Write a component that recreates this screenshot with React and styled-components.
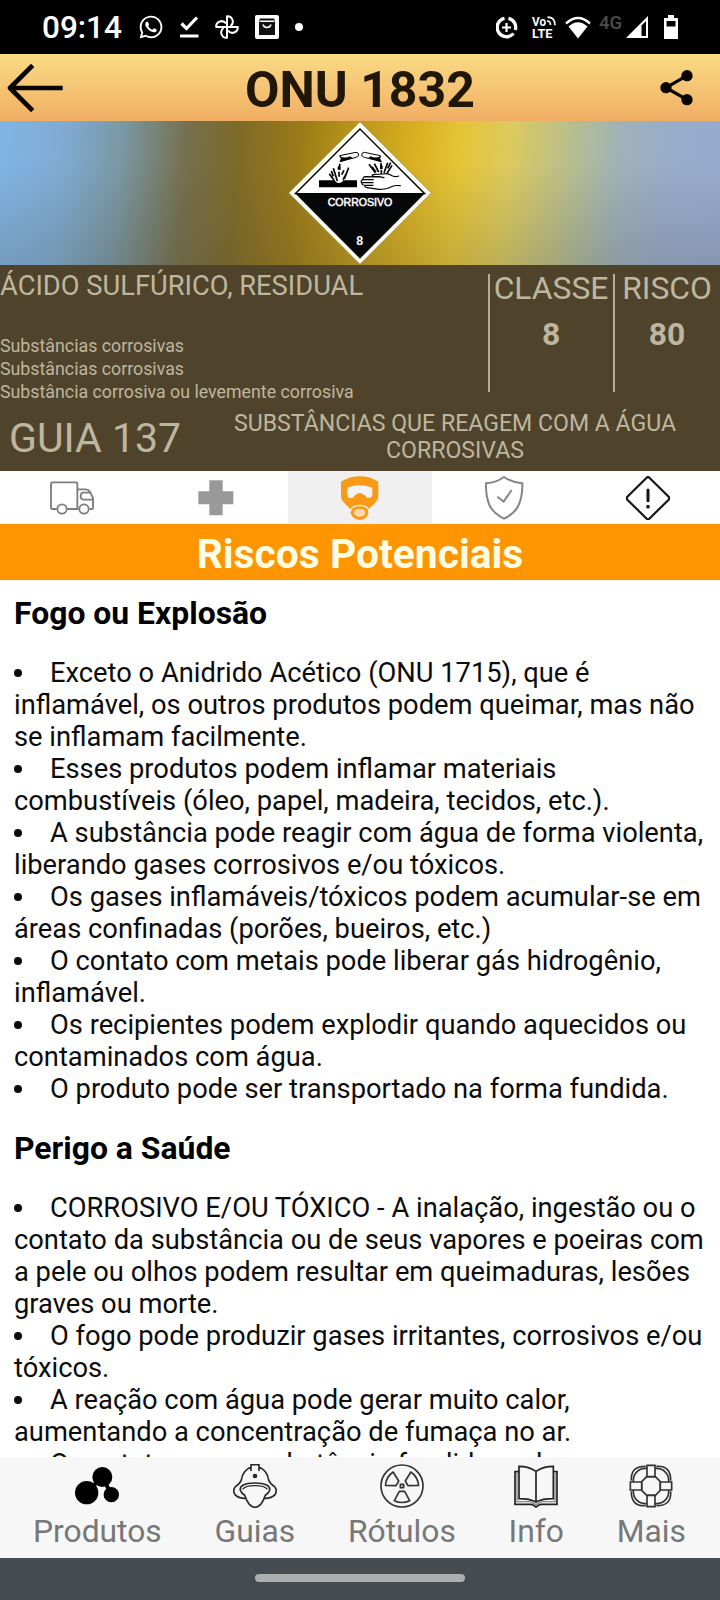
import styled, { createGlobalStyle } from 'styled-components';
import { FaWhatsapp } from 'react-icons/fa';

const GlobalStyle = createGlobalStyle`
  body {
    margin: 0;
    background: #fff;
    font-family: Roboto, 'Liberation Sans', sans-serif;
  }

  * {
    box-sizing: border-box;
  }

  svg {
    display: block;
    flex-shrink: 0;
  }
`;

const Screen = styled.div`
  width: 720px;
  height: 1600px;
  display: flex;
  flex-direction: column;
  overflow: hidden;
`;

/* Status bar */

const StatusBar = styled.div`
  height: 54px;
  flex-shrink: 0;
  display: flex;
  align-items: center;
  padding: 0 42px 0 42px;
  background: #000;
  color: #fff;
`;

const Time = styled.div`
  width: 96px;
  padding-top: 1px;
  font-size: 31.5px;
  font-weight: 500;
  line-height: 54px;
`;

const StatusIcons = styled.div`
  display: flex;
  align-items: center;
  gap: ${({ $gap }) => $gap}px;
`;

const Spacer = styled.div`
  flex: 1;
`;

const Dot = styled.div`
  width: 8px;
  height: 8px;
  border-radius: 50%;
  background: #fff;
`;

const Signal = styled.div`
  display: flex;
  align-items: center;
  gap: 4px;
  margin: 0 8px 0 0;
`;

const Network = styled.span`
  width: 23px;
  margin-top: -9px;
  font-size: 18.5px;
  font-weight: 500;
  color: #4c4c4c;
`;

/* Header */

const Header = styled.header`
  height: 67px;
  flex-shrink: 0;
  display: grid;
  grid-template-columns: 100px 1fr 100px;
  align-items: center;
  background: linear-gradient(#fadb84, #f0ae64);
`;

const HeaderButton = styled.button`
  display: flex;
  justify-content: ${({ $end }) => ($end ? 'flex-end' : 'flex-start')};
  padding: ${({ $end }) => ($end ? '0 27px 0 0' : '0 0 0 7px')};
  border: none;
  background: none;
`;

const Title = styled.h1`
  margin: 0;
  padding-top: 4px;
  font-size: 50px;
  font-weight: 700;
  line-height: 60px;
  text-align: center;
  white-space: nowrap;
  color: #211708;
`;

/* Placard */

const Banner = styled.div`
  height: 144px;
  flex-shrink: 0;
  display: flex;
  justify-content: center;
  background:
    linear-gradient(to bottom, rgba(70, 70, 60, 0) 30%, rgba(70, 70, 60, 0.2)),
    linear-gradient(
      95deg,
      #7fb5e6 0%,
      #7fabd2 9%,
      #7a97a3 17%,
      #756f4c 26%,
      #7f6a28 33%,
      #9a7a19 41%,
      #bb9718 49%,
      #d9b022 57%,
      #e5c436 63%,
      #dcca5f 70%,
      #b9be8c 78%,
      #9fb2b8 85%,
      #98adca 91%,
      #97abcf 100%
    );
`;

/* Product info */

const Info = styled.section`
  height: 206px;
  flex-shrink: 0;
  display: flex;
  flex-direction: column;
  background: #4f442b;
  color: #bfb69f;
`;

const InfoTop = styled.div`
  height: 138px;
  display: flex;
`;

const Product = styled.div`
  width: 488px;
  display: flex;
  flex-direction: column;
  justify-content: space-between;
  padding-top: 5px;
`;

const ProductName = styled.div`
  font-size: 27.3px;
  line-height: 32px;
  white-space: nowrap;
`;

const Hazard = styled.div`
  font-size: 17.8px;
  line-height: 23px;
`;

const Stat = styled.div`
  width: ${({ $width }) => $width}px;
  height: 118px;
  margin-top: 9px;
  border-left: 2px solid #b5ad98;
  display: flex;
  flex-direction: column;
  align-items: center;
`;

const StatLabel = styled.div`
  height: 37px;
  margin-left: -1px;
  font-size: 31.8px;
  line-height: 29px;
`;

const StatValue = styled.div`
  margin-left: -1px;
  font-size: 31.8px;
  font-weight: 700;
  line-height: 46px;
`;

const GuideRow = styled.div`
  height: 68px;
  display: flex;
  align-items: center;
`;

const GuideNumber = styled.div`
  width: 190px;
  padding-top: 1px;
  font-size: 41px;
  text-align: center;
  white-space: nowrap;
`;

const GuideName = styled.div`
  flex: 1;
  font-size: 23.1px;
  line-height: 27px;
  text-align: center;
`;

/* Tabs */

const Tabs = styled.nav`
  height: 53px;
  flex-shrink: 0;
  display: grid;
  grid-template-columns: repeat(5, 1fr);
  background: #fff;
`;

const Tab = styled.div`
  display: flex;
  align-items: center;
  justify-content: center;
  background: ${({ $active }) => ($active ? '#f0f0f0' : '#fff')};
`;

const SectionTitle = styled.h2`
  height: 56px;
  flex-shrink: 0;
  margin: 0;
  padding-top: 3px;
  background: #ff9500;
  color: #fffde4;
  font-size: 40.8px;
  font-weight: 700;
  line-height: 54px;
  text-align: center;
`;

/* Guide text */

const Content = styled.main`
  flex: 1;
  min-height: 0;
  overflow: hidden;
  padding: 15px 14px 0;
  background: #fff;
  color: #0c0c0c;
`;

const Heading = styled.h3`
  margin: 0 0 26px;
  font-size: 31.9px;
  font-weight: 700;
  line-height: 36px;
  color: #000;
`;

const List = styled.ul`
  margin: 0 0 25px;
  padding: 0;
  list-style: none;
`;

const Item = styled.li`
  font-size: 27.3px;
  line-height: 32px;

  &::before {
    content: '';
    display: inline-block;
    width: 8px;
    height: 8px;
    margin-right: 28px;
    border-radius: 50%;
    background: #0c0c0c;
    vertical-align: 5px;
  }
`;

/* Bottom navigation */

const BottomNav = styled.nav`
  height: 101px;
  flex-shrink: 0;
  display: flex;
  justify-content: space-between;
  padding: 7px 34px 0 33px;
  background: #f7f7f7;
`;

const NavItem = styled.div`
  display: flex;
  flex-direction: column;
  align-items: center;
  gap: 4px;
`;

const NavLabel = styled.span`
  font-size: 31.8px;
  line-height: 38px;
  color: #777;
`;

const GestureBar = styled.div`
  height: 42px;
  flex-shrink: 0;
  display: flex;
  justify-content: center;
  padding-top: 16px;
  background: #454c51;
`;

const Handle = styled.div`
  width: 210px;
  height: 8px;
  border-radius: 4px;
  background: #abafb2;
`;

const DownloadDone = () => (
  <svg width="19" height="22" viewBox="0 0 19 22" fill="none" stroke="#fff" strokeWidth="3.2">
    <path d="M1.5 7.5 6.5 12.5 17 1.5M0 20h18.500" />
  </svg>
);

const Pinwheel = () => (
  <svg width="24" height="24" viewBox="0 0 24 24" fill="none" stroke="#fff" strokeWidth="2" strokeLinejoin="round">
    {[0, 90, 180, 270].map((angle) => (
      <path key={angle} transform={`rotate(${angle} 12 12)`} d="M12 12V1.200A5.400 5.400 0 0 1 15.500 11" />
    ))}
    <path d="M12 5V19M5 12H19" />
  </svg>
);

const Bag = () => (
  <svg width="24" height="24" viewBox="0 0 24 24">
    <rect width="24" height="24" rx="2" fill="#fff" />
    <path d="M5 3.500h14l1 2.500v14H4V6Z" fill="#111" />
    <path d="M4.500 6.200h15M8 9.500c1 4 7 4 8 0" fill="none" stroke="#fff" strokeWidth="1.400" />
  </svg>
);

const DataSaver = () => (
  <svg width="28" height="23" viewBox="1 0 28 23" fill="none" stroke="#fff">
    <path d="M13.500 2.300A9.300 9.300 0 0 1 20.300 14M18.500 17.500A9.300 9.300 0 1 1 9.500 2.300" strokeWidth="3.400" />
    <path d="M11.500 7v9M7 11.500h9" strokeWidth="2.200" />
  </svg>
);

const VoLte = () => (
  <svg width="25" height="24" viewBox="0 0 25 24" fill="#fff" fontFamily="Roboto, sans-serif" fontSize="12.500" fontWeight="700">
    <text x="0" y="10.500" textLength="14" lengthAdjust="spacingAndGlyphs">Vo</text>
    <text x="0" y="22.500" textLength="20.500" lengthAdjust="spacingAndGlyphs">LTE</text>
    <path d="M15 6q3.500 0 3.500 4M15.500 2.200q7.500 0 7.500 8" fill="none" stroke="#fff" strokeWidth="1.700" />
  </svg>
);

const Wifi = () => (
  <svg width="26" height="23" viewBox="0 0 26 23">
    <path d="M13 22.500 3.500 10.500Q13 2 22.500 10.500Z" fill="#fff" />
    <path d="M1 7.500Q13-3.500 25 7.500" fill="none" stroke="#fff" strokeWidth="2.400" />
  </svg>
);

const CellSignal = () => (
  <svg width="22" height="22" viewBox="0 0 22 22">
    <path d="M0 22 22 0V22Z" fill="#fff" />
    <path d="M15.500 9.500 20 5V20H15.500Z" fill="#000" />
  </svg>
);

const Battery = () => (
  <svg width="14" height="24" viewBox="0 0 14 24">
    <path d="M4 0h6v3h4v21H0V3h4Z" fill="#fff" />
    <path d="M2.500 6h9v5.500h-9Z" fill="#000" />
  </svg>
);

const BackArrow = () => (
  <svg width="57" height="50" viewBox="21 189 171 150" fill="none" stroke="#080500" strokeWidth="14">
    <path d="M98 196 30 264 98 332M29 264H188" strokeLinejoin="round" />
  </svg>
);

const Share = () => (
  <svg width="33" height="37" viewBox="899 208 99 111" fill="#080500">
    <path d="M980 228 917 264 980 300" fill="none" stroke="#080500" strokeWidth="10" />
    <circle cx="980" cy="228" r="17" />
    <circle cx="917" cy="264" r="17" />
    <circle cx="980" cy="300" r="17" />
  </svg>
);

// Class 8 placard: two test tubes dripping over a metal bar and a hand
const Placard = () => (
  <svg width="144" height="144" viewBox="54 17 432 432">
    <path d="M270 19 484 233 270 447 56 233Z" fill="#fffdf0" stroke="#8a8259" strokeWidth="2" />
    <path d="M270 40 465 235H75Z" fill="#fff" />
    <path d="M75 234H465L270 430Z" fill="#050708" />
    <path d="M270 41 464 235H76Z" fill="none" stroke="#000" strokeWidth="4" />
    <g stroke="#000" strokeWidth="3" fill="#fff" strokeLinejoin="round">
      <path d="M209 121 258 111Q267 112 266 119 265 124 258 126L210 139 214 130Z" />
      <path d="M331 121 283 111Q274 112 275 119 276 124 283 126L334 139 329 130Z" />
    </g>
    <path d="M208 121Q222 131 240 123L248 128 210 140 214 130ZM333 121Q318 131 302 123L295 128 334 140 329 130Z" />
    <path d="M147 195H195Q197 203 207 203 217 203 219 195H261V216H147Z" />
    <g stroke="#000" fill="none" strokeWidth="5">
      <path d="M209 145V163M207 169V184M190 159 202 197M178 175 192 195M236 157 223 191M222 165 215 178M184 167 190 183M229 175 219 193" />
      <path d="M333 143V158M334 163V177M313 145 326 170M297 147 316 172M306 154 318 171M353 142 342 172M366 150 351 174M362 142 353 159" />
    </g>
    <path d="M203 156q4-8 8 0v7h-8ZM330 153q4-8 8 0v8h-8Z" />
    <path
      d="M386 182Q374 187 362 179 350 173 339 176L315 177Q304 178 307 182 310 184 328 184L342 187M331 185 287 184Q278 185 279 192M310 193H279Q272 195 274 202M309 202H277Q274 206 280 209M309 210H284Q283 216 291 217L327 222Q349 222 364 214 376 209 391 211"
      fill="none"
      stroke="#000"
      strokeWidth="3.500"
      strokeLinecap="round"
    />
    <g
      fill="#fff"
      stroke="#fff"
      strokeWidth="1.500"
      fontFamily="'Liberation Sans', Arial, sans-serif"
      textAnchor="middle"
    >
      <text x="270" y="273" fontSize="32" textLength="194" lengthAdjust="spacingAndGlyphs">CORROSIVO</text>
      <text x="269" y="389" fontSize="37" fontWeight="700" strokeWidth="0">8</text>
    </g>
  </svg>
);

const Truck = () => (
  <svg width="44" height="44" viewBox="150 32 132 132" fill="none" stroke="#7d7d7d" strokeWidth="5.500">
    <path d="M170 131H157Q153 131 153 127V55Q153 51 157 51H229Q232 51 232 54V129M202 131H236M232 72H258Q266 73 271 81L279 98V128Q279 131 276 131H268M272 82H248Q242 84 242 93 242 102 250 103H279" />
    <circle cx="186" cy="131" r="14" fill="#fff" />
    <circle cx="252" cy="131" r="14" fill="#fff" />
  </svg>
);

const Plus = () => (
  <svg width="44" height="44" viewBox="581 32 132 132" fill="#999">
    <path d="M627 45H667V78H699V117H667V150H627V117H594V78H627Z" />
  </svg>
);

const Mask = () => (
  <svg width="44" height="44" viewBox="54 32 132 132">
    <path
      d="M63 49Q90 33 119 33 149 33 175 49V96Q174 106 163 115L147 130Q145 164 119 164 92 163 90 131L74 114Q64 106 63 96Z"
      fill="#f99a16"
    />
    <path d="M82 67Q119 53 157 67V88Q157 97 148 97H142Q128 83 119 83 110 83 98 98H91Q82 97 82 88Z" fill="#f3f3f3" />
    <path d="M91 140Q92 121 119 120 146 121 147 140" fill="none" stroke="#f3f3f3" strokeWidth="4" />
    <ellipse cx="119" cy="142" rx="17" ry="12" fill="#f6d9ae" />
  </svg>
);

const Shield = () => (
  <svg width="44" height="44" viewBox="366 32 132 132" fill="none" stroke="#858585" strokeWidth="6">
    <path d="M432 35Q455 51 487 54 488 91 476 119 464 145 432 160 401 145 388 119 377 91 378 54 410 51 432 35Z" />
    <path d="M412 94 431 109 455 74" />
  </svg>
);

const Warning = () => (
  <svg width="44" height="44" viewBox="798 32 132 132" fill="none" stroke="#151515" strokeWidth="6.500">
    <path d="M860 37Q864 33 868 37L926 94Q930 98 926 103L868 160Q864 164 860 160L802 103Q798 98 802 94Z" />
    <path d="M864 74V106" strokeWidth="9" strokeLinecap="round" />
    <circle cx="864" cy="124" r="5.500" fill="#151515" stroke="none" />
  </svg>
);

const Molecule = () => (
  <svg width="44" height="44" viewBox="225 102 132 132">
    <path d="M307 140 260 188M307 140 334 194" stroke="#000" strokeWidth="12" />
    <circle cx="307" cy="141" r="30" />
    <circle cx="260" cy="188" r="35" />
    <circle cx="334" cy="194" r="23" />
  </svg>
);

const Helmet = () => (
  <svg width="44" height="44" viewBox="699 102 132 132" fill="none" stroke="#2a2a2a" strokeWidth="5" strokeLinejoin="round">
    <path d="M753 111Q728 121 724 150 720 161 706 170 697 181 705 194 716 206 738 205M777 111Q802 121 806 150 810 161 824 170 833 181 825 194 814 206 792 205M753 123V104H777V123" />
    <path d="M721 181Q717 160 765 159 813 160 809 181 806 190 796 196 790 214 782 223 773 232 765 232 757 232 748 223 740 214 734 196 724 190 721 181Z" />
    <path d="M728 178Q735 167 765 167 795 167 802 178" strokeWidth="4" />
    <circle cx="765" cy="138" r="7" fill="#2a2a2a" stroke="none" />
  </svg>
);

const Radiation = () => (
  <svg width="44" height="44" viewBox="60 102 132 132" fill="none" stroke="#333" strokeWidth="5" strokeLinejoin="round">
    <circle cx="126" cy="168" r="63" />
    <rect x="121" y="163" width="10" height="10" />
    {[0, 120, 240].map((angle) => (
      <path key={angle} transform={`rotate(${angle} 126 168)`} d="M118 184H134L149 212Q126 223 103 212Z" />
    ))}
  </svg>
);

const Book = () => (
  <svg width="44" height="44" viewBox="465 102 132 132" fill="none" stroke="#222" strokeWidth="5">
    <path d="M531 124Q510 109 480 109V206Q511 206 531 216 551 206 583 206V109Q552 109 531 124ZM531 124V216" />
    <path d="M480 125H468V223H517Q523 224 531 231 539 224 545 223H594V125H583" />
    <path d="M474 126V215H515L531 224 547 215H588V126" stroke="#888" strokeWidth="4" />
  </svg>
);

const Lifebuoy = () => (
  <svg width="44" height="44" viewBox="807 102 132 132" fill="none" stroke="#333" strokeWidth="5">
    <rect x="820" y="115" width="106" height="106" rx="36" />
    <path d="M860 140H886L901 155V181L886 196H860L845 181V155Z" />
    {[0, 90, 180, 270].map((angle) => (
      <g key={angle} transform={`rotate(${angle} 873 168)`}>
        <path d="M861 106H885V140H861Z" fill="#f7f7f7" />
        <path d="M889 109Q933 106 932 152" />
      </g>
    ))}
  </svg>
);

const tabs = [Truck, Plus, Mask, Shield, Warning];

const navItems = [
  { label: 'Produtos', Icon: Molecule },
  { label: 'Guias', Icon: Helmet },
  { label: 'Rótulos', Icon: Radiation },
  { label: 'Info', Icon: Book },
  { label: 'Mais', Icon: Lifebuoy },
];

const sections = [
  {
    title: 'Fogo ou Explosão',
    items: [
      'Exceto o Anidrido Acético (ONU 1715), que é inflamável, os outros produtos podem queimar, mas não se inflamam facilmente.',
      'Esses produtos podem inflamar materiais combustíveis (óleo, papel, madeira, tecidos, etc.).',
      'A substância pode reagir com água de forma violenta, liberando gases corrosivos e/ou tóxicos.',
      'Os gases inflamáveis/tóxicos podem acumular-se em áreas confinadas (porões, bueiros, etc.)',
      'O contato com metais pode liberar gás hidrogênio, inflamável.',
      'Os recipientes podem explodir quando aquecidos ou contaminados com água.',
      'O produto pode ser transportado na forma fundida.',
    ],
  },
  {
    title: 'Perigo a Saúde',
    items: [
      'CORROSIVO E/OU TÓXICO - A inalação, ingestão ou o contato da substância ou de seus vapores e poeiras com a pele ou olhos podem resultar em queimaduras, lesões graves ou morte.',
      'O fogo pode produzir gases irritantes, corrosivos e/ou tóxicos.',
      'A reação com água pode gerar muito calor, aumentando a concentração de fumaça no ar.',
      'O contato com a substância fundida pode',
    ],
  },
];

const App = () => {
  return (
    <>
      <GlobalStyle />
      <Screen>
        <StatusBar>
          <Time>09:14</Time>
          <StatusIcons $gap={16}>
            <FaWhatsapp size={26} />
            <DownloadDone />
            <Pinwheel />
            <Bag />
            <Dot />
          </StatusIcons>
          <Spacer />
          <StatusIcons $gap={8}>
            <DataSaver />
            <VoLte />
            <Wifi />
            <Signal>
              <Network>4G</Network>
              <CellSignal />
            </Signal>
            <Battery />
          </StatusIcons>
        </StatusBar>

        <Header>
          <HeaderButton aria-label="Voltar">
            <BackArrow />
          </HeaderButton>
          <Title>ONU 1832</Title>
          <HeaderButton $end aria-label="Compartilhar">
            <Share />
          </HeaderButton>
        </Header>

        <Banner>
          <Placard />
        </Banner>

        <Info>
          <InfoTop>
            <Product>
              <ProductName>ÁCIDO SULFÚRICO, RESIDUAL</ProductName>
              <div>
                <Hazard>Substâncias corrosivas</Hazard>
                <Hazard>Substâncias corrosivas</Hazard>
                <Hazard>Substância corrosiva ou levemente corrosiva</Hazard>
              </div>
            </Product>
            <Stat $width={125}>
              <StatLabel>CLASSE</StatLabel>
              <StatValue>8</StatValue>
            </Stat>
            <Stat $width={107}>
              <StatLabel>RISCO</StatLabel>
              <StatValue>80</StatValue>
            </Stat>
          </InfoTop>
          <GuideRow>
            <GuideNumber>GUIA 137</GuideNumber>
            <GuideName>
              SUBSTÂNCIAS QUE REAGEM COM A ÁGUA
              <br />
              CORROSIVAS
            </GuideName>
          </GuideRow>
        </Info>

        <Tabs>
          {tabs.map((Icon, index) => (
            <Tab key={index} $active={index === 2}>
              <Icon />
            </Tab>
          ))}
        </Tabs>
        <SectionTitle>Riscos Potenciais</SectionTitle>

        <Content>
          {sections.map((section) => (
            <section key={section.title}>
              <Heading>{section.title}</Heading>
              <List>
                {section.items.map((item) => (
                  <Item key={item}>{item}</Item>
                ))}
              </List>
            </section>
          ))}
        </Content>

        <BottomNav>
          {navItems.map(({ label, Icon }) => (
            <NavItem key={label}>
              <Icon />
              <NavLabel>{label}</NavLabel>
            </NavItem>
          ))}
        </BottomNav>
        <GestureBar>
          <Handle />
        </GestureBar>
      </Screen>
    </>
  );
};

export default App;
